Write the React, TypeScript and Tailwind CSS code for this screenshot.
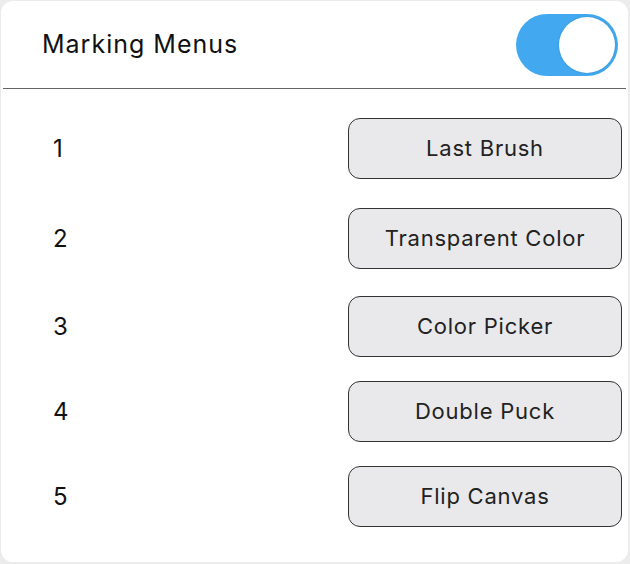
import React, { useState } from "react";

const rows = [
  { n: "1", label: "Last Brush", mt: "mt-[29px]" },
  { n: "2", label: "Transparent Color", mt: "mt-[29px]" },
  { n: "3", label: "Color Picker", mt: "mt-[27px]" },
  { n: "4", label: "Double Puck", mt: "mt-[24px]" },
  { n: "5", label: "Flip Canvas", mt: "mt-[24px]" },
];

export default function App() {
  const [on, setOn] = useState(true);

  return (
    <div
      className="h-[564px] w-[630px] bg-[#ececec] p-px"
      style={{ fontFamily: "Inter, 'Noto Sans', sans-serif" }}
    >
      <div className="h-[561px] w-[627px] rounded-[12px] bg-white">
        <div className="flex h-[87px] items-center justify-between pl-[41px] pr-[10px]">
          <span className="text-[25px] tracking-[0.04em] text-[#111]">Marking Menus</span>
          <button
            type="button"
            onClick={() => setOn(!on)}
            className="flex h-[62px] w-[102px] items-center rounded-full bg-[#42a9f1] p-[3px]"
          >
            <span
              className={
                "block h-[56px] w-[56px] rounded-full bg-white shadow-[0_0_3px_rgba(0,0,0,0.15)] " +
                (on ? "ml-auto" : "")
              }
            />
          </button>
        </div>
        <div className="mx-[2px] h-px bg-[#666]" />
        <div className="flex flex-col">
          {rows.map((r) => (
            <div key={r.n} className={"flex items-center justify-between pl-[52px] pr-[6px] " + r.mt}>
              <span className="text-[24px] text-[#111]">{r.n}</span>
              <button
                type="button"
                className="flex h-[61px] w-[274px] items-center justify-center rounded-[12px] border border-[#333] bg-[#e9e9eb] text-[22px] tracking-[0.035em] text-[#222]"
              >
                {r.label}
              </button>
            </div>
          ))}
        </div>
      </div>
    </div>
  );
}
